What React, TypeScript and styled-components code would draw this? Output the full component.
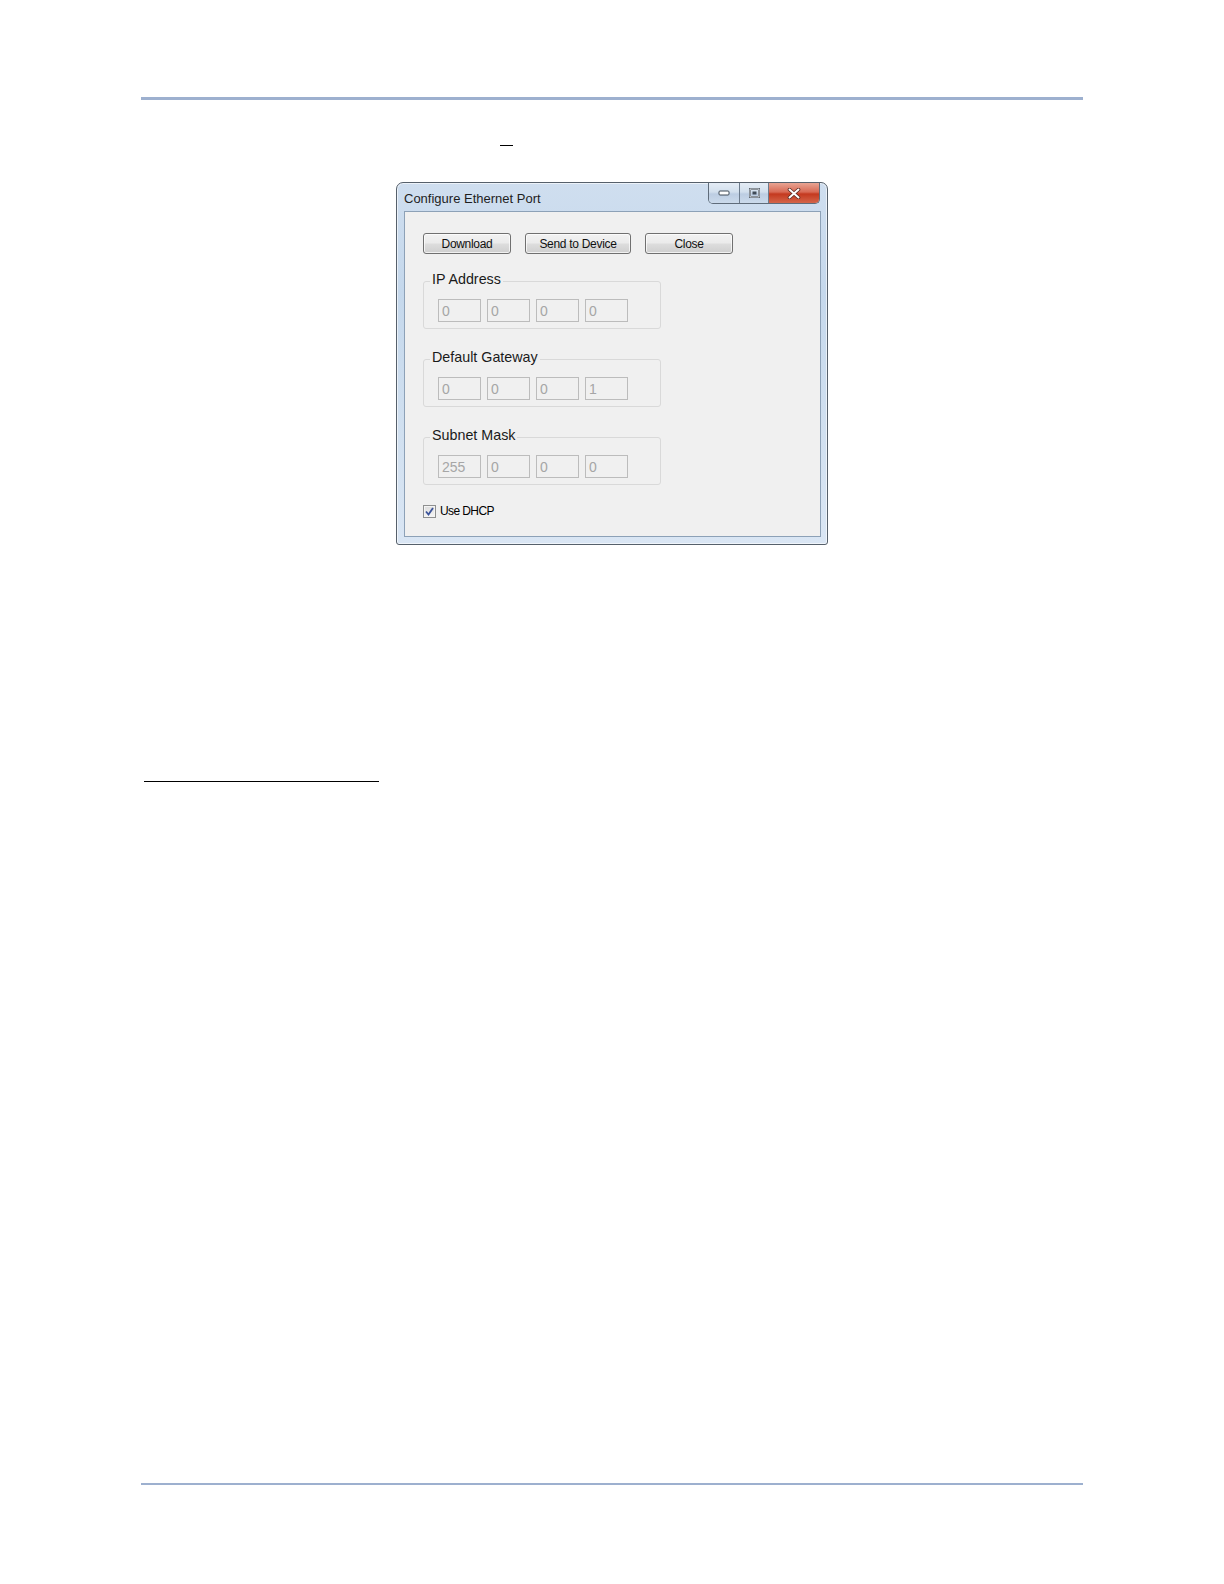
import styled, { createGlobalStyle } from 'styled-components'

const GlobalStyle = createGlobalStyle`
  html, body {
    margin: 0;
    padding: 0;
    background: #ffffff;
    overflow: hidden;
  }
  body {
    font-family: "Liberation Sans", Arial, sans-serif;
  }
`

const Page = styled.div`
  width: 1224px;
  height: 1584px;
  box-sizing: border-box;
  padding: 97px 141px 0 141px;
  background: #ffffff;
  overflow: hidden;
`

const Rule = styled.div<{ $thick: number; $gap?: number }>`
  height: ${p => p.$thick}px;
  margin-top: ${p => p.$gap || 0}px;
  background: #9db0cf;
`

const NoteRow = styled.div`
  display: flex;
  margin-top: 45px;
  padding-left: 359px;
`

const Underscore = styled.span`
  display: block;
  width: 13px;
  border-top: 1px solid #000;
`

const Figure = styled.div`
  display: flex;
  justify-content: center;
  margin-top: 36px;
`

const Window = styled.div`
  width: 432px;
  height: 363px;
  box-sizing: border-box;
  display: flex;
  flex-direction: column;
  padding: 0 6px 7px 7px;
  border: 1px solid #56606b;
  border-radius: 7px 7px 3px 3px;
  background: linear-gradient(180deg, #cfdeef 0%, #c5d8ec 30%, #d1e0f0 70%, #dae6f4 100%);
  box-shadow: inset 0 0 0 1px rgba(255, 255, 255, 0.6);
`

const TitleBar = styled.div`
  height: 28px;
  display: flex;
  justify-content: space-between;
  align-items: flex-start;
`

const Title = styled.span`
  padding-top: 9px;
  font-size: 13px;
  line-height: 14px;
  color: #1e1e1e;
`

const CaptionGroup = styled.div`
  display: flex;
  height: 20px;
  margin-right: 1px;
  border: 1px solid #5f6c7a;
  border-top: none;
  border-radius: 0 0 5px 5px;
  overflow: hidden;
`

const CaptionButton = styled.div<{ $w: number; $close?: boolean }>`
  width: ${p => p.$w}px;
  display: flex;
  align-items: center;
  justify-content: center;
  background: ${p =>
    p.$close
      ? 'linear-gradient(180deg, #e8a493 0%, #d86a55 45%, #c4391f 55%, #d4654a 100%)'
      : 'linear-gradient(180deg, #e4ecf5 0%, #d2dfed 45%, #bccde2 55%, #cbdaeb 100%)'};
  & + & {
    border-left: 1px solid #6c7b8c;
  }
`

const Client = styled.div`
  flex: 1;
  border: 1px solid #8da1b7;
  background: #f0f0f0;
  padding: 21px 0 0 18px;
`

const ButtonRow = styled.div`
  display: flex;
  column-gap: 14px;
`

const PushButton = styled.button<{ $w: number }>`
  width: ${p => p.$w}px;
  height: 21px;
  box-sizing: border-box;
  padding: 0;
  border: 1px solid #707070;
  border-radius: 3px;
  background: linear-gradient(180deg, #f2f2f2 0%, #ebebeb 48%, #dddddd 52%, #cfcfcf 100%);
  box-shadow: inset 0 0 0 1px rgba(255, 255, 255, 0.7);
  font-family: "Liberation Sans", Arial, sans-serif;
  font-size: 12px;
  letter-spacing: -0.3px;
  color: #111;
`

const GroupBox = styled.fieldset`
  width: 238px;
  box-sizing: border-box;
  margin: 17px 0 0 0;
  padding: 8px 0 6px 14px;
  border: 1px solid #d9d9d9;
  border-radius: 3px;
  & + & {
    margin-top: 20px;
  }
`

const Legend = styled.legend`
  margin-left: -8px;
  padding: 0 2px 4px 2px;
  font-size: 14.3px;
  line-height: 16px;
  color: #1a1a1a;
`

const FieldRow = styled.div`
  display: flex;
  column-gap: 6px;
`

const Field = styled.input`
  width: 43px;
  height: 23px;
  box-sizing: border-box;
  margin: 0;
  padding: 0 0 0 3px;
  border: 1px solid #bcbcbc;
  border-radius: 0;
  background: #f0f0f0;
  font-family: "Liberation Sans", Arial, sans-serif;
  font-size: 14px;
  color: #a6a6a6;
  -webkit-text-fill-color: #a6a6a6;
  opacity: 1;
`

const CheckRow = styled.label`
  display: flex;
  align-items: center;
  column-gap: 4px;
  margin-top: 20px;
  font-size: 12px;
  letter-spacing: -0.6px;
  line-height: 13px;
  color: #000;
`

const CheckBox = styled.span`
  width: 13px;
  height: 13px;
  box-sizing: border-box;
  display: flex;
  align-items: center;
  justify-content: center;
  border: 1px solid #8e8f8f;
  background: linear-gradient(180deg, #dcdcdc 0%, #f6f6f6 100%);
  box-shadow: inset 0 0 0 1px #f4f4f4;
`

const FootnoteRule = styled.div`
  width: 235px;
  height: 1px;
  margin: 236px 0 0 3px;
  background: #000;
`

const groups = [
  { label: 'IP Address', values: ['0', '0', '0', '0'] },
  { label: 'Default Gateway', values: ['0', '0', '0', '1'] },
  { label: 'Subnet Mask', values: ['255', '0', '0', '0'] },
]

const MinGlyph = () => (
  <svg width="12" height="6" viewBox="0 0 12 6">
    <rect x="1" y="1" width="10" height="4" rx="1" fill="#ffffff" stroke="#3f4a57" strokeWidth="1" />
  </svg>
)

const RestoreGlyph = () => (
  <svg width="11" height="10" viewBox="0 0 11 10">
    <rect x="1" y="1" width="9" height="8" fill="none" stroke="#3f4a57" strokeWidth="2" />
    <rect x="1" y="1" width="9" height="8" fill="none" stroke="#ffffff" strokeWidth="0.8" />
    <rect x="3.5" y="3.5" width="4" height="3" fill="#3f4a57" />
  </svg>
)

const CloseGlyph = () => (
  <svg width="14" height="11" viewBox="0 0 14 11">
    <path d="M2.5 1.5 L11.5 9.5 M11.5 1.5 L2.5 9.5" stroke="#5a2a22" strokeWidth="3.6" strokeLinecap="round" />
    <path d="M2.5 1.5 L11.5 9.5 M11.5 1.5 L2.5 9.5" stroke="#ffffff" strokeWidth="2" strokeLinecap="round" />
  </svg>
)

const App = () => {
  return (
    <>
      <GlobalStyle />
      <Page>
        <Rule $thick={3} />
        <NoteRow>
          <Underscore />
        </NoteRow>
        <Figure>
          <Window>
            <TitleBar>
              <Title>Configure Ethernet Port</Title>
              <CaptionGroup>
                <CaptionButton $w={30}>
                  <MinGlyph />
                </CaptionButton>
                <CaptionButton $w={28}>
                  <RestoreGlyph />
                </CaptionButton>
                <CaptionButton $w={50} $close>
                  <CloseGlyph />
                </CaptionButton>
              </CaptionGroup>
            </TitleBar>
            <Client>
              <ButtonRow>
                <PushButton $w={88}>Download</PushButton>
                <PushButton $w={106}>Send to Device</PushButton>
                <PushButton $w={88}>Close</PushButton>
              </ButtonRow>
              {groups.map(g => (
                <GroupBox key={g.label}>
                  <Legend>{g.label}</Legend>
                  <FieldRow>
                    {g.values.map((v, i) => (
                      <Field key={i} value={v} readOnly disabled />
                    ))}
                  </FieldRow>
                </GroupBox>
              ))}
              <CheckRow>
                <CheckBox>
                  <svg width="9" height="9" viewBox="0 0 9 9">
                    <path d="M1 4.5 L3.5 7.5 L8 1" fill="none" stroke="#3b539a" strokeWidth="1.8" />
                  </svg>
                </CheckBox>
                Use DHCP
              </CheckRow>
            </Client>
          </Window>
        </Figure>
        <FootnoteRule />
        <Rule $thick={2} $gap={701} />
      </Page>
    </>
  )
}

export default App
